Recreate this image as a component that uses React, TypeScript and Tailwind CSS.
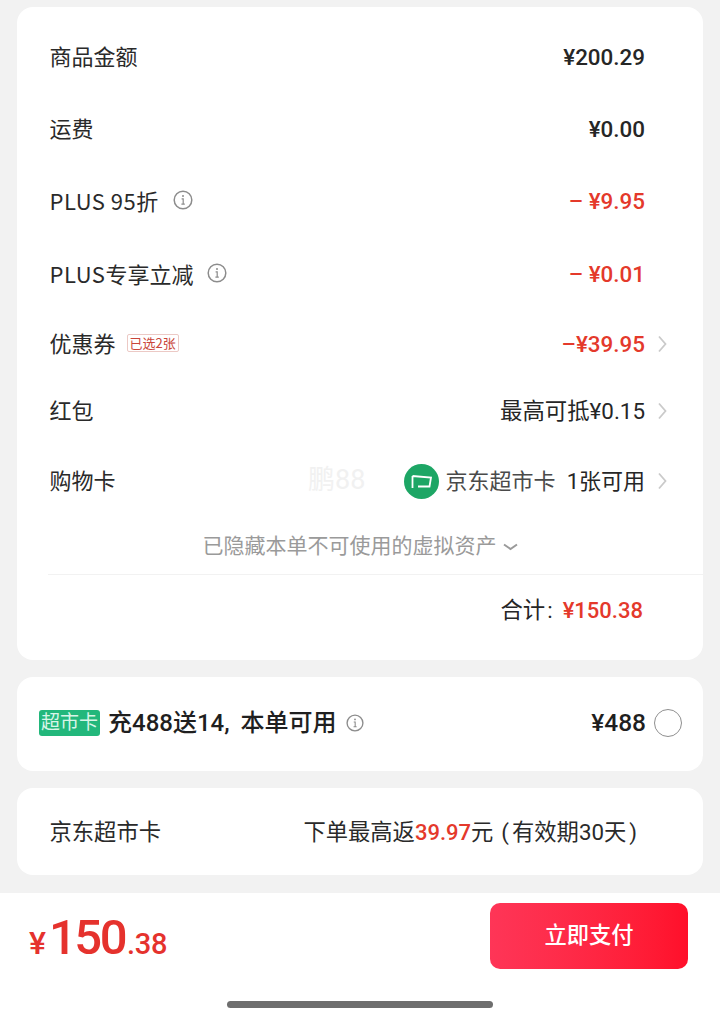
const font = "font-['Roboto','Noto_Sans_CJK_SC',sans-serif]";

function Info({ size = 20 }: { size?: number }) {
  return (
    <svg width={size} height={size} viewBox="0 0 20 20" fill="none" className="shrink-0">
      <circle cx="10" cy="10" r="8.8" stroke="#8c8c8c" strokeWidth="1.5" />
      <circle cx="10" cy="6" r="1" fill="#8c8c8c" />
      <path d="M8.6 8.8H10.2V14M8.4 14.2H11.8" stroke="#8c8c8c" strokeWidth="1.2" />
    </svg>
  );
}

function Chevron() {
  return (
    <svg width="10" height="18" viewBox="0 0 10 18" fill="none" className="shrink-0">
      <path d="M2 1.5L8.5 9L2 16.5" stroke="#cacaca" strokeWidth="1.8" />
    </svg>
  );
}

function Row({
  h,
  left,
  right,
  arrow,
}: {
  h: string;
  left: React.ReactNode;
  right: React.ReactNode;
  arrow?: boolean;
}) {
  return (
    <div className={`flex items-center justify-between pl-[32.5px] pr-[36px] ${h}`}>
      <div className="flex items-center pb-[3px] font-['Noto_Sans_CJK_SC',sans-serif] text-[22px] text-[#2a2a2a]">{left}</div>
      <div className="flex items-center pt-[1px]">
        <div className="flex items-center text-[22.4px]">{right}</div>
        <div className="flex w-[22px] justify-end">{arrow && <Chevron />}</div>
      </div>
    </div>
  );
}

export default function App() {
  return (
    <div className={`flex h-[1019px] w-[720px] flex-col overflow-hidden bg-[#f2f2f2] ${font}`}>
      <div className="flex flex-col gap-[17px] px-[17px] pt-[7px]">
        <div className="relative h-[653px] rounded-[16px] bg-white pt-[14px]">
          <Row h="h-[72px]" left="商品金额" right={<span className="font-medium text-[#262626]">¥200.29</span>} />
          <Row h="h-[72px]" left="运费" right={<span className="font-medium text-[#262626]">¥0.00</span>} />
          <Row
            h="h-[72px] pt-[1px]"
            left={
              <>
                <span className="tracking-[0.5px]">PLUS 95</span>
                <span>折</span>
                <span className="ml-[15px]">
                  <Info />
                </span>
              </>
            }
            right={<span className="font-medium text-[#e4392b]">– ¥9.95</span>}
          />
          <Row
            h="h-[73px] pt-[2px]"
            left={
              <>
                <span className="tracking-[0.5px]">PLUS</span>
                <span>专享立减</span>
                <span className="ml-[14px]">
                  <Info />
                </span>
              </>
            }
            right={<span className="font-medium text-[#e4392b]">– ¥0.01</span>}
          />
          <Row
            h="h-[66px] pt-[2px]"
            arrow
            left={
              <>
                <span>优惠券</span>
                <span className="ml-[11px] rounded-[2px] border border-[#ecc9c5] px-[2px] text-[13px] leading-[16px] text-[#c9453a]">
                  已选2张
                </span>
              </>
            }
            right={<span className="font-medium text-[#e4392b]">–¥39.95</span>}
          />
          <Row
            h="h-[68px] pt-[2px]"
            arrow
            left="红包"
            right={<span className="text-[#262626]">最高可抵¥0.15</span>}
          />
          <Row
            h="h-[72px] pt-[1px]"
            arrow
            left="购物卡"
            right={
              <>
                <svg width="35" height="35" viewBox="0 0 35 35" fill="none" className="mr-[7px]">
                  <circle cx="17.5" cy="17.5" r="17.5" fill="#1da665" />
                  <path d="M8.5 12L27 13.5L25.5 22.5H14M8.5 12V24" stroke="white" strokeWidth="1.8" />
                </svg>
                <span className="text-[22px] text-[#4a4a4a]">京东超市卡</span>
                <span className="ml-[11px] text-[22px] text-[#262626]">1张可用</span>
              </>
            }
          />
          <div className="flex h-[58px] items-center justify-center gap-[6px] pt-[3px] text-[21px] text-[#9a9a9a]">
            <span>已隐藏本单不可使用的虚拟资产</span>
            <svg width="15" height="8" viewBox="0 0 15 8" fill="none">
              <path d="M1 1.5L7.5 6L14 1.5" stroke="#9a9a9a" strokeWidth="2" />
            </svg>
          </div>
          <div className="ml-[31px] h-px bg-[#f2f2f2]" />
          <div className="flex h-[71px] items-center justify-end pr-[60px] text-[22.4px]">
            <span className="text-[#262626]">合计</span>
            <span className="ml-[2px] text-[#262626]">:</span>
            <span className="ml-[10px] text-[22px] font-medium text-[#e4392b]">¥150.38</span>
          </div>
          <span className="absolute left-[291px] top-[453px] text-[27px] text-[#f1f1f1]">鹏88</span>
        </div>

        <div className="flex h-[94px] items-center justify-between rounded-[16px] bg-white pb-[2px] pl-[22px] pr-[21px]">
          <div className="flex items-center">
            <span className="flex h-[26px] w-[61px] items-center justify-center rounded-[3px] bg-[#22b77b] text-[19px] text-[#d8f5e8]">
              超市卡
            </span>
            <span className="ml-[8px] text-[24px] font-medium text-[#1f1f1f]">充488送14,</span>
            <span className="ml-[11px] text-[24px] font-medium text-[#1f1f1f]">本单可用</span>
            <span className="ml-[9px]">
              <Info size={18} />
            </span>
          </div>
          <div className="flex items-center gap-[8px]">
            <span className="text-[24.5px] font-medium text-[#1f1f1f]">¥488</span>
            <span className="h-[28px] w-[28px] rounded-full border border-[#8f8f8f]" />
          </div>
        </div>

        <div className="flex h-[87px] items-center justify-between rounded-[16px] bg-white pl-[32.5px] pr-[66px] pt-[2px] text-[22.3px] text-[#2a2a2a]">
          <span>京东超市卡</span>
          <span>
            下单最高返<span className="text-[22px] font-medium text-[#e4392b]">39.97</span>元
            <span className="ml-[8px]">(</span>
            <span className="ml-[3px]">有效期30天</span>
            <span className="ml-[3px]">)</span>
          </span>
        </div>
      </div>

      <div className="relative mt-[18px] flex h-[126px] items-start justify-between bg-white pl-[29px] pr-[32px] pt-[10px]">
        <div className="mt-[10px] flex items-baseline font-medium text-[#e5322d]">
          <span className="text-[32px] leading-[50px]">¥</span>
          <span className="ml-[3px] text-[49px] leading-[50px] tracking-[-2.5px]">150</span>
          <span className="ml-[2px] text-[29px] leading-[50px] tracking-[-0.3px]">.38</span>
        </div>
        <button className="flex h-[66px] w-[198px] items-center justify-center rounded-[10px] bg-gradient-to-r from-[#fe3557] to-[#ff0f2a] text-[22.3px] font-medium text-[#fff]">
          立即支付
        </button>
        <div className="absolute bottom-[11px] left-[227px] h-[7px] w-[266px] rounded-full bg-[#6e6e6e]" />
      </div>
    </div>
  );
}
